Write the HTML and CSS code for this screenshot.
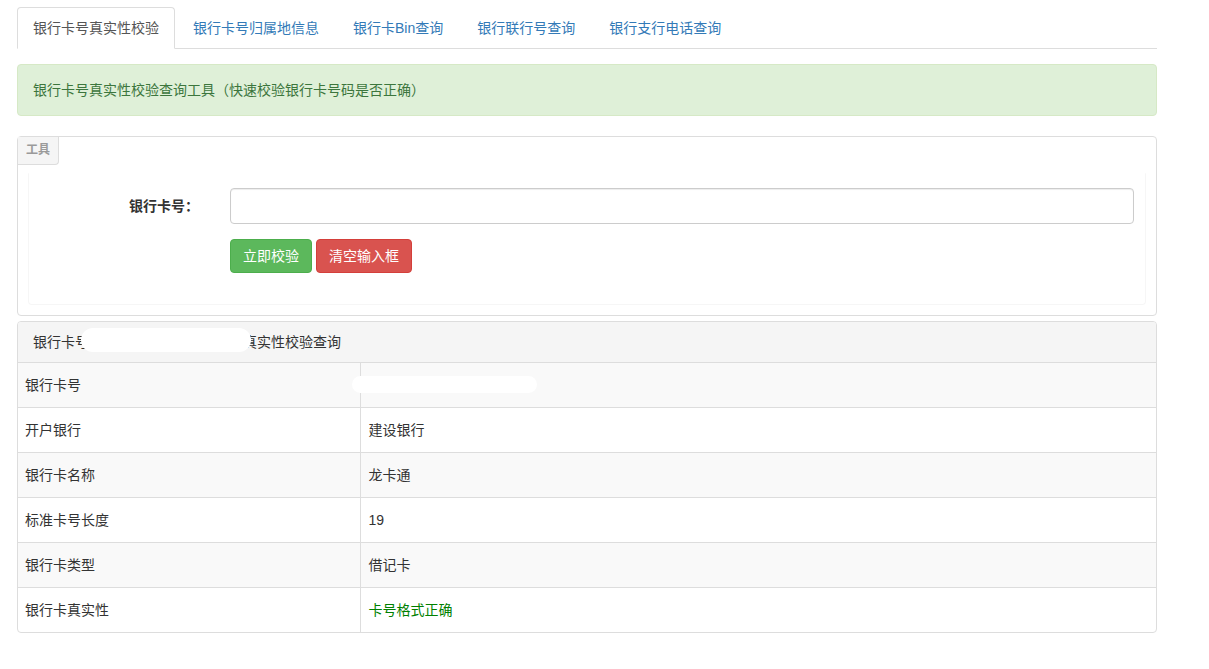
FILE: index.html
```html
<!DOCTYPE html>
<html lang="zh-CN">
<head>
<meta charset="utf-8">
<title>银行卡号真实性校验</title>
<link rel="stylesheet" href="styles.css">
</head>
<body>
<div class="container">
  <ul class="tabs">
    <li class="tab active"><a>银行卡号真实性校验</a></li>
    <li class="tab"><a>银行卡号归属地信息</a></li>
    <li class="tab"><a>银行卡Bin查询</a></li>
    <li class="tab"><a>银行联行号查询</a></li>
    <li class="tab"><a>银行支行电话查询</a></li>
  </ul>

  <div class="alert">银行卡号真实性校验查询工具（快速校验银行卡号码是否正确）</div>

  <div class="tool-panel">
    <div class="legend">工具</div>
    <div class="tool-body">
      <div class="form-row">
        <label class="form-label">银行卡号：</label>
        <div class="form-field"><input class="form-input" type="text"></div>
      </div>
      <div class="form-row">
        <div class="form-label"></div>
        <div class="form-field buttons">
          <button class="btn btn-success">立即校验</button>
          <button class="btn btn-danger">清空输入框</button>
        </div>
      </div>
    </div>
  </div>

  <div class="result-panel">
    <div class="result-heading">银行卡号<span class="gap"></span>真实性校验查询<span class="blob blob-head"></span></div>
    <table class="result-table">
      <tr><td class="key">银行卡号</td><td class="val"><span class="blob blob-cell"></span></td></tr>
      <tr><td class="key">开户银行</td><td class="val">建设银行</td></tr>
      <tr><td class="key">银行卡名称</td><td class="val">龙卡通</td></tr>
      <tr><td class="key">标准卡号长度</td><td class="val">19</td></tr>
      <tr><td class="key">银行卡类型</td><td class="val">借记卡</td></tr>
      <tr><td class="key">银行卡真实性</td><td class="val ok">卡号格式正确</td></tr>
    </table>
  </div>
</div>
</body>
</html>
```

FILE: styles.css
```css
* { box-sizing: border-box; }
html, body { margin: 0; padding: 0; background: #fff; }
body {
  font-family: "Liberation Sans", "Noto Sans CJK SC", sans-serif;
  font-size: 14px;
  line-height: 20px;
  color: #333;
}
.container {
  width: 1140px;
  margin-left: 17px;
  padding-top: 7px;
}

/* tabs */
.tabs {
  list-style: none;
  margin: 0;
  padding: 0;
  display: flex;
  border-bottom: 1px solid #ddd;
}
.tab { margin-right: 2px; margin-bottom: -1px; }
.tab a {
  display: block;
  padding: 10px 15px;
  line-height: 20px;
  border: 1px solid transparent;
  border-radius: 4px 4px 0 0;
  color: #337ab7;
}
.tab.active a {
  color: #555;
  background: #fff;
  border-color: #ddd #ddd transparent #ddd;
}

/* alert */
.alert {
  margin-top: 15px;
  margin-bottom: 20px;
  padding: 15px;
  background: #dff0d8;
  border: 1px solid #d6e9c6;
  border-radius: 4px;
  color: #3c763d;
}

/* tool panel */
.tool-panel {
  border: 1px solid #ddd;
  border-radius: 4px;
  margin-bottom: 5px;
  padding-bottom: 10px;
}
.legend {
  display: inline-block;
  padding: 5px 8px 6px 8px;
  line-height: 16px;
  font-size: 12px;
  font-weight: bold;
  color: #9a9a9a;
  background: #f5f5f5;
  border-right: 1px solid #ddd;
  border-bottom: 1px solid #ddd;
  border-radius: 0 0 4px 0;
  vertical-align: top;
}
.tool-body {
  margin: 8px 10px 0;
  padding: 14px 0 31px;
  border: 1px solid #f6f6f6;
  border-top-color: transparent;
  border-radius: 0 0 4px 4px;
  display: flex;
  flex-direction: column;
  gap: 15px;
}
.form-row { display: flex; align-items: center; }
.form-label {
  width: 185px;
  flex: none;
  padding-right: 15px;
  text-align: right;
  font-weight: bold;
}
.form-field { flex: 1; padding-left: 16px; padding-right: 11px; }
.form-input {
  display: block;
  width: 100%;
  height: 36px;
  border: 1px solid #ccc;
  border-radius: 4px;
  box-shadow: inset 0 1px 1px rgba(0,0,0,.075);
  padding: 6px 12px;
  font: inherit;
}
.buttons { display: flex; gap: 4px; }
.btn {
  height: 34px;
  padding: 6px 12px;
  font: inherit;
  font-size: 14px;
  line-height: 20px;
  border: 1px solid transparent;
  border-radius: 4px;
  color: #fff;
}
.btn-success { background: #5cb85c; border-color: #4cae4c; }
.btn-danger { background: #d9534f; border-color: #d43f3a; }

/* results */
.result-panel {
  border: 1px solid #ddd;
  border-radius: 4px;
  overflow: hidden;
}
.result-heading {
  position: relative;
  padding: 10px 15px;
  background: #f5f5f5;
  border-bottom: 1px solid #ddd;
  color: #333;
}
.gap { display: inline-block; width: 154px; }
.blob { position: absolute; background: #fff; border-radius: 12px; }
.blob-head { left: 63px; top: 6px; width: 170px; height: 24px; }
.result-table {
  width: 100%;
  border-collapse: collapse;
}
.result-table td {
  padding: 12px 7px;
  line-height: 20px;
  border-top: 1px solid #ddd;
  vertical-align: top;
}
.result-table tr:first-child td { border-top: 0; }
.result-table tr:nth-child(odd) td { background: #f9f9f9; }
.key { width: 342px; border-right: 1px solid #ddd; }
.val { position: relative; padding-left: 8px !important; }
.ok { color: #008000; }
.blob-cell { left: -9px; top: 13px; width: 185px; height: 17px; border-radius: 9px; }
```
